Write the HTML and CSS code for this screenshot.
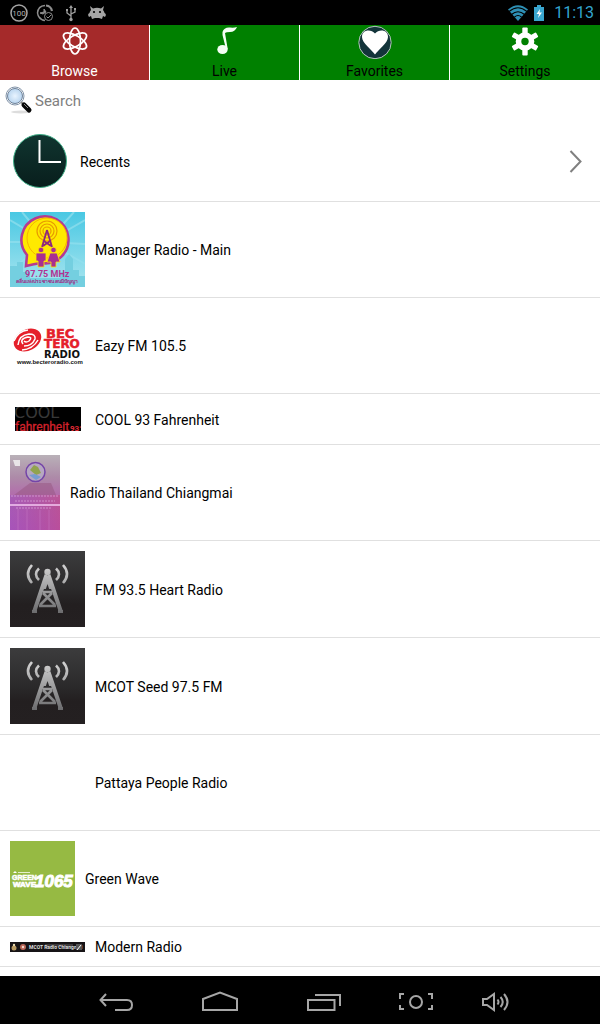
FILE: index.html
```html
<!DOCTYPE html>
<html lang="en">
<head>
<meta charset="utf-8">
<meta name="viewport" content="width=device-width, initial-scale=1">
<title>Radio</title>
<link rel="stylesheet" href="styles.css">
</head>
<body>
<svg width="0" height="0" class="defs" aria-hidden="true">
  <defs>
    <linearGradient id="dark" x1="0" y1="0" x2="0" y2="1"><stop offset="0" stop-color="#3c3c3d"/><stop offset=".5" stop-color="#2b2a2b"/><stop offset=".7" stop-color="#231f20"/><stop offset="1" stop-color="#242021"/></linearGradient>
    <linearGradient id="metal" gradientUnits="userSpaceOnUse" x1="0" y1="14" x2="0" y2="62"><stop offset="0" stop-color="#d2d2d2"/><stop offset="1" stop-color="#6c6c6e"/></linearGradient>
    <symbol id="tower" viewBox="0 0 75 76">
      <rect width="75" height="76" fill="url(#dark)"/>
      <g fill="none" stroke="url(#metal)" stroke-width="2.6">
        <path d="M22 14Q14 23 22 32M29 17.500Q23 23 29 29M53 14Q61 23 53 32M46 17.500Q52 23 46 29"/>
        <path d="M36.500 24L24 61M38.500 24L51 61" stroke-width="4"/>
        <path d="M33 41H42M29 55H46M33 42L45 54M42 42L30 54" stroke-width="2.600"/>
      </g>
      <path d="M35 25H40L43 38H32ZM22 59H27V62H22ZM48 59H53V62H48Z" fill="url(#metal)"/>
      <path d="M37.500 33L39.500 39H35.500Z" fill="#2b2a2b"/>
      <circle cx="37.500" cy="21" r="3.200" fill="url(#metal)"/>
    </symbol>
  </defs>
</svg>

<header class="status">
  <div class="status-group">
    <svg width="18" height="18" viewBox="0 0 18 18"><circle cx="9" cy="9" r="8" fill="none" stroke="#a5a5a5" stroke-width="1.500"/><text x="9" y="12" text-anchor="middle" font-size="8" fill="#b0b0b0">100</text></svg>
    <svg width="18" height="18" viewBox="0 0 18 18" fill="none" stroke="#8d8d8d"><path d="M9 1.500Q2 2 1.500 9Q2 12 3 13Q5 16 9 16.500" stroke-width="1.500"/><path d="M10 1.500Q15 2 16 7" stroke-width="2.200"/><path d="M8 5V8L4 9L7 10L10 8Z" fill="#8d8d8d"/><circle cx="12.500" cy="12.500" r="4"/><path d="M10.500 12.500L12 14L15 11"/></svg>
    <svg width="18" height="18" viewBox="0 0 18 18" fill="none" stroke="#a0a0a0" stroke-width="1.300"><path d="M9 15V3M9 12L5 9V6M9 10L13 8V5"/><path d="M7 4L9 1L11 4Z" fill="#a0a0a0" stroke="none"/><circle cx="9" cy="15.500" r="1.700" fill="#a0a0a0" stroke="none"/><path d="M12 4H14V6H12ZM4 5H6V7H4Z" fill="#a0a0a0" stroke="none"/></svg>
    <svg width="18" height="18" viewBox="0 0 18 18"><path d="M2 2L5 4.500Q9 3 13 4.500L16 2L15 6Q16.500 8 16.500 9Q19 10 17 13L15 12L14 15L11 14H7L4 15L3 12L1 13Q-1 10 1.500 9Q1.500 8 3 6Z" fill="#a5a5a5"/><circle cx="6" cy="8" r="1.100"/><circle cx="12" cy="8" r="1.100"/></svg>
  </div>
  <div class="status-right">
    <svg width="20" height="16" viewBox="0 0 20 16"><path d="M0 4.500Q10-4 20 4.500L10 16Z" fill="#2e90b5"/><path d="M1 6.500Q10-1 19 6.500M3.500 9.500Q10 4 16.500 9.500M6.500 12Q10 9 13.500 12" fill="none" stroke="#000" stroke-width="1.100"/></svg>
    <svg width="10" height="16" viewBox="0 0 10 16"><path d="M3 0H7V2H10V16H0V2H3Z" fill="#3aa6cf"/><path d="M6 4L2.500 9H5L4 13L8 7.500H5.500Z" fill="#fff"/></svg>
    <time class="clock">11:13</time>
  </div>
</header>

<nav class="tabs">
  <button class="tab tab-active" type="button">
    <svg width="34" height="34" viewBox="0 0 34 34" fill="none" stroke="#fff" stroke-width="1.700"><ellipse cx="17" cy="16" rx="5.500" ry="13"/><ellipse cx="17" cy="16" rx="5.500" ry="13" transform="rotate(60 17 16)"/><ellipse cx="17" cy="16" rx="5.500" ry="13" transform="rotate(120 17 16)"/></svg>
    <span>Browse</span>
  </button>
  <button class="tab" type="button">
    <svg width="34" height="34" viewBox="0 0 34 34"><ellipse cx="14.500" cy="24.500" rx="5.200" ry="4.500" fill="#f4fff4"/><path d="M14.500 7Q16 2 22 2.500Q26 3 29 2Q27 7 22 7Q18 7 17 8L19.700 24H18L14.500 10Z" fill="#f4fff4"/></svg>
    <span>Live</span>
  </button>
  <button class="tab" type="button">
    <svg width="34" height="34" viewBox="0 0 34 34"><circle cx="17" cy="17.500" r="16.200" fill="#13343a" stroke="#b5c8bd"/><path d="M17 29.500C14 25 4 18 4 12C4 4.500 13 4 17 8.500C21 4 30 4.500 30 12C30 18 20 25 17 29.500Z" fill="#fff"/></svg>
    <span>Favorites</span>
  </button>
  <button class="tab" type="button">
    <svg width="34" height="34" viewBox="0 0 34 34"><g fill="#fff"><circle cx="17" cy="16.500" r="9.300"/><rect x="14.300" y="2.500" width="5.400" height="28" rx="1"/><rect x="14.300" y="2.500" width="5.400" height="28" rx="1" transform="rotate(60 17 16.500)"/><rect x="14.300" y="2.500" width="5.400" height="28" rx="1" transform="rotate(120 17 16.500)"/></g><circle cx="17" cy="16.500" r="3.700" fill="#008000"/></svg>
    <span>Settings</span>
  </button>
</nav>

<main class="content">
  <div class="search">
    <label for="search" aria-label="Search"><svg width="30" height="30" viewBox="0 0 30 30"><defs><radialGradient id="lens"><stop offset="0" stop-color="#e9f4ff"/><stop offset="1" stop-color="#b9d5ef"/></radialGradient></defs><ellipse cx="16" cy="26" rx="10" ry="1.500" fill="#ddd"/><circle cx="10" cy="10" r="9" fill="#fff" stroke="#8193a8"/><circle cx="10" cy="10" r="7.500" fill="url(#lens)" stroke="#6f8299"/><path d="M16 16L19 19" stroke="#888" stroke-width="2"/><path d="M19 19L24 24" stroke="#080808" stroke-width="5" stroke-linecap="round"/><path d="M19 18L23 22" stroke="#888"/></svg></label>
    <input id="search" type="text" placeholder="Search">
  </div>
  <ul class="list">
    <li class="row row-recents">
      <svg width="60" height="60" viewBox="0 0 60 60"><defs><linearGradient id="face" x1="0" y1="0" x2="0" y2="1"><stop offset="0" stop-color="#103530"/><stop offset="1" stop-color="#081e1c"/></linearGradient></defs><circle cx="30" cy="30" r="26.500" fill="url(#face)" stroke="#3fae87"/><path d="M29.500 9V31H51" fill="none" stroke="#fff" stroke-width="2"/></svg>
      <span class="name">Recents</span>
      <svg width="14" height="24" viewBox="0 0 14 24" fill="none" stroke="#808080" stroke-width="2"><path d="M1.500 2L11.500 12.500L1.500 23"/></svg>
    </li>
    <li class="row">
      <svg width="75" height="75" viewBox="0 0 75 75"><defs><linearGradient id="sky" x1="0" y1="0" x2="0" y2="1"><stop offset="0" stop-color="#49c8e3"/><stop offset="1" stop-color="#a9e5ef"/></linearGradient></defs><rect width="75" height="75" fill="url(#sky)"/><g stroke="#93e0ee" stroke-width="2" opacity=".7"><path d="M37 30L0 8M37 30L0 30M37 30L75 8M37 30L75 32M37 30L5 55M37 30L75 52M37 30L12 0M37 30L64 0"/></g><path d="M0 65V54H7V50H13V60H20V66H50V60H55V47L59 42L63 47V58H69V64H75V75H0Z" fill="#74cfe0"/><path d="M16 54L17 43A23.500 23.500 0 1 1 31 51Q24 52 16 54Z" fill="#ffe900" stroke="#b53b91" stroke-width="2.600"/><circle cx="37" cy="26" r="20" fill="#ffe900" stroke="#f6b400"/><g fill="none" stroke="#e89b00" stroke-width="1.200"><circle cx="37" cy="19" r="4"/><circle cx="37" cy="19" r="7"/><circle cx="37" cy="19" r="10"/></g><path d="M37 18L32 35M37 18L42 35M34 29L41 34M40 29L33 34" stroke="#8e277e" stroke-width="1.800" fill="none"/><g fill="#a92e91" stroke="#ffe900" stroke-width=".8"><circle cx="31" cy="38" r="2.800"/><circle cx="43.500" cy="38" r="2.800"/><path d="M26 41H36V49H34V55H28V49H26ZM40 41H47L50 50H46V55H41V50H37Z"/></g><text x="15" y="65" font-size="9" font-weight="700" fill="#b23392">97.75 MHz</text><text x="37" y="71" text-anchor="middle" font-size="5" font-weight="700" fill="#a0308a">คลื่นแห่งประชาชน คนมีปัญญา</text></svg>
      <span class="name">Manager Radio - Main</span>
    </li>
    <li class="row">
      <svg width="75" height="75" viewBox="0 0 75 75"><ellipse cx="17.500" cy="32" rx="14.500" ry="10.500" transform="rotate(-28 17.500 32)" fill="#e5202b"/><path d="M8 37Q9 27 19 26Q26 26 25 31Q22 38 14 38M13 36Q9 31 18 29Q23 29 19 33Q16 35 14 33M4 33Q8 23 18 22M12 42Q23 41 28 32" stroke="#fff" stroke-width="1.500" fill="none"/><g class="wide"><text x="36" y="30" font-size="13" fill="#e5202b" stroke="#e5202b" stroke-width=".5">BEC</text><text x="34" y="40" font-size="12" fill="#e5202b" stroke="#e5202b" stroke-width=".5">TERO</text><text x="34" y="50" font-size="10" fill="#111">RADIO</text></g><text class="heavy" x="7" y="56" font-size="6" fill="#111">www.becteroradio.com</text></svg>
      <span class="name">Eazy FM 105.5</span>
    </li>
    <li class="row">
      <svg width="75" height="30" viewBox="0 0 75 30"><defs><clipPath id="cool"><rect x="5" y="3" width="66" height="24"/></clipPath></defs><g clip-path="url(#cool)"><rect x="5" y="3" width="66" height="24"/><text class="round" x="4" y="14" font-size="16" fill="#383838">COOL</text><text x="5" y="27" font-size="12" fill="#d3222c" stroke="#d3222c" stroke-width=".3">fahrenheit</text><text x="60" y="27" font-size="8" font-weight="700" fill="#e42a34">93°</text></g></svg>
      <span class="name">COOL 93 Fahrenheit</span>
    </li>
    <li class="row">
      <svg width="50" height="75" viewBox="0 0 50 75"><defs><linearGradient id="violet" x1="0" y1="0" x2="0" y2="1"><stop offset="0" stop-color="#b9b1b8"/><stop offset=".3" stop-color="#ad8aa8"/><stop offset=".6" stop-color="#b464ad"/><stop offset="1" stop-color="#b35ab5"/></linearGradient><linearGradient id="rose"><stop offset="0" stop-color="#8b45c5" stop-opacity=".3"/><stop offset="1" stop-color="#c43c75" stop-opacity=".4"/></linearGradient></defs><rect width="50" height="75" fill="url(#violet)"/><rect y="40" width="50" height="35" fill="url(#rose)"/><path d="M4 40L20 28H41L46 40Z" fill="#955580" opacity=".5"/><path d="M3 5H10V11H5Z" fill="#e8e5e8"/><circle cx="25.500" cy="17" r="9.500" fill="#b6a7c1" stroke="#7445a8" stroke-width="1.500"/><path d="M20 15L24 10L28 12L31 18L26 20Z" fill="#91a34e"/><path d="M19 20L25 19L31 22L26 25Z" fill="#779cd0"/><path d="M1 41H48M5 46H45M6 53H42" stroke="#e5b8e5" stroke-dasharray="2 1" opacity=".6"/><path d="M0 50H50" stroke="#f4c8f2" stroke-width="1.500"/><path d="M8 54V75M17 54V75M30 55V75M39 55V75" stroke="#c778c5" opacity=".5"/></svg>
      <span class="name">Radio Thailand Chiangmai</span>
    </li>
    <li class="row">
      <svg width="75" height="76"><use href="#tower"/></svg>
      <span class="name">FM 93.5 Heart Radio</span>
    </li>
    <li class="row">
      <svg width="75" height="76"><use href="#tower"/></svg>
      <span class="name">MCOT Seed 97.5 FM</span>
    </li>
    <li class="row">
      <div class="blank"></div>
      <span class="name">Pattaya People Radio</span>
    </li>
    <li class="row">
      <svg width="65" height="75" viewBox="0 0 65 75"><rect width="65" height="75" fill="#96ba43"/><g fill="#fff" stroke="#fff" class="heavy"><path d="M3 32L5 30L7 32Z" stroke="none"/><path d="M8 31.500H20" stroke="#e5efcc"/><text x="2" y="39" font-size="7" stroke-width=".5">GREEN</text><text x="3" y="46" font-size="8" stroke-width=".7">WAVE</text><text x="25" y="46" font-size="17" font-style="italic">1065</text></g></svg>
      <span class="name">Green Wave</span>
    </li>
    <li class="row">
      <svg width="75" height="10" viewBox="0 0 75 10"><rect width="75" height="10" fill="#171416"/><circle cx="4" cy="6" r="2.500" fill="#b99b62"/><circle cx="4" cy="3" r="1.200" fill="#eadbb0"/><circle cx="13" cy="5" r="3" fill="#b96658"/><circle cx="13" cy="5" r="1.200" fill="#f1d8ca"/><path d="M35 2H63V5H35Z" fill="#3c393b"/><text x="19" y="7" font-size="5" font-weight="700" fill="#ddd">MCOT Radio Chiangmai</text><path d="M66 2H72V8H66Z" fill="#555"/><path d="M67 8L71 3" stroke="#fff"/></svg>
      <span class="name">Modern Radio</span>
    </li>
  </ul>
</main>

<footer class="navbar">
  <button type="button" aria-label="Back"><svg width="36" height="24" viewBox="0 0 36 24"><path d="M8 4L2.500 10L8 16M3 10H29Q34 10 34 15Q34 20 29 20H17"/></svg></button>
  <button type="button" aria-label="Home"><svg width="40" height="24" viewBox="0 0 40 24"><path d="M3 20V9L20 2.500L37 9V20Z"/></svg></button>
  <button type="button" aria-label="Recent apps"><svg width="36" height="24" viewBox="0 0 36 24"><path d="M2 10H28.500V20H2ZM9 5H34V16"/></svg></button>
  <button type="button" aria-label="Screenshot"><svg width="36" height="24" viewBox="0 0 36 24"><path d="M6 4H2V9M2 15V19H6M30 4H34V9M34 15V19H30"/><circle cx="18" cy="12" r="6"/></svg></button>
  <button type="button" aria-label="Volume"><svg width="30" height="24" viewBox="0 0 30 24"><path d="M2 9H6L13 4V20L6 15H2ZM16.500 9.500Q18.500 12 16.500 14.500M19.500 7Q24 12 19.500 17M23 4Q30 12 23 20"/></svg></button>
</footer>
</body>
</html>
```

FILE: styles.css
```css
* { box-sizing: border-box; }

body {
  margin: 0;
  min-height: 100vh;
  display: flex;
  flex-direction: column;
  background: #fff;
  color: #000;
  font-family: Roboto, "Noto Sans", sans-serif;
  font-size: 14px;
  line-height: 18px;
}

svg { display: block; flex: none; }
.defs { position: absolute; }

button {
  margin: 0;
  padding: 0;
  border: 0;
  background: none;
  color: inherit;
  font: inherit;
}

.status {
  display: flex;
  justify-content: space-between;
  align-items: center;
  height: 25px;
  padding: 0 6px 0 10px;
  background: #000;
}
.status-group { display: flex; gap: 8px; }
.status-right { display: flex; align-items: center; gap: 6px; }
.clock { padding-left: 4px; color: #33a5cf; font-size: 16px; }

.tabs {
  display: grid;
  grid-template-columns: repeat(4, 1fr);
  height: 55px;
}
.tab {
  display: flex;
  flex-direction: column;
  align-items: center;
  background: #008000;
  border-right: 1px solid #fff;
}
.tab:last-child { border-right: 0; }
.tab span { padding-top: 3px; }
.tab-active { background: #a52a2a; color: #fff; }

.content { flex: 1; }

.search {
  display: flex;
  align-items: center;
  height: 41px;
  padding-left: 5px;
}
.search input {
  flex: 1;
  min-width: 0;
  padding: 1px 0 0;
  border: 0;
  outline: 0;
  background: none;
  font: inherit;
  font-size: 15px;
}
.search input::placeholder { color: #808080; opacity: 1; }

.list { margin: 0; padding: 0; list-style: none; }
.row {
  display: flex;
  align-items: center;
  gap: 10px;
  padding: 10px;
  border-bottom: 1px solid #e0e0e0;
}
.row-recents { padding-right: 17px; }
.name { flex: 1; padding-top: 1px; }
.blank { width: 75px; height: 75px; }
.heavy { font-family: "Liberation Sans", sans-serif; font-weight: 700; }
.wide { font-family: "DejaVu Sans", sans-serif; font-weight: 700; }
.round { font-family: "DejaVu Sans", sans-serif; }

.navbar {
  display: flex;
  align-items: center;
  justify-content: center;
  height: 48px;
  padding: 4px 0 0;
  background: #000;
}
.navbar button { width: 104px; display: flex; justify-content: center; }
.navbar button:nth-child(n+4) { width: 80px; }
.navbar svg { fill: none; stroke: #a6a6a6; stroke-width: 2; }
```
